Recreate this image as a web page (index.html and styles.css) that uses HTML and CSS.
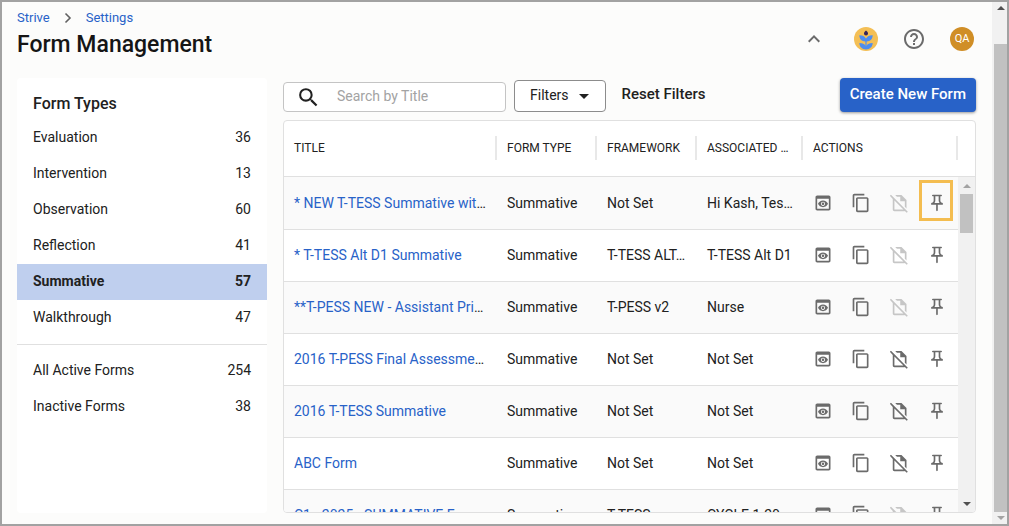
FILE: index.html
```html
<!DOCTYPE html>
<html lang="en">
<head>
    <meta charset="UTF-8">
    <meta name="viewport" content="width=device-width, initial-scale=1.0">
    <title>Form Management</title>
    <link rel="stylesheet" href="styles.css">
</head>
<body>
    <!-- shared icons -->
    <svg class="sprite" aria-hidden="true">
        <symbol id="i-preview" viewBox="0 0 24 24"><path d="M19 3H5c-1.11 0-2 .9-2 2v14c0 1.1.89 2 2 2h14c1.1 0 2-.9 2-2V5c0-1.1-.89-2-2-2zm0 16H5V7h14v12zm-5.5-6c0 .83-.67 1.5-1.5 1.5s-1.5-.67-1.5-1.5.67-1.5 1.5-1.5 1.5.67 1.5 1.5zM12 9c-2.73 0-5.06 1.66-6 4 .94 2.34 3.27 4 6 4s5.06-1.66 6-4c-.94-2.34-3.27-4-6-4zm0 6.5c-1.38 0-2.5-1.12-2.5-2.5s1.12-2.5 2.5-2.5 2.5 1.12 2.5 2.5-1.12 2.5-2.5 2.5z"/></symbol>
        <symbol id="i-copy" viewBox="0 0 24 24"><path d="M16 1H4c-1.1 0-2 .9-2 2v14h2V3h12V1zm3 4H8c-1.1 0-2 .9-2 2v14c0 1.1.9 2 2 2h11c1.1 0 2-.9 2-2V7c0-1.1-.9-2-2-2zm0 16H8V7h11v14z"/></symbol>
        <symbol id="i-fileoff" viewBox="0 0 24 24"><path d="M2.400 2 22.600 22.400 21.200 23.800 19 21.600c-.3.2-.6.3-1 .3H6.500c-1.100 0-2-.9-2-2V7.100L1 3.400zM6.500 9.100v10.800h10.800zM7.500 2.500H15l6 6v10l-2-2V10h-5.500V4.500H9.500z"/></symbol>
        <symbol id="i-pin" viewBox="0 0 24 24"><path d="M14 4v5c0 1.120.37 2.160 1 3H9c.65-.86 1-1.900 1-3V4h4m3-2H7c-.55 0-1 .45-1 1s.45 1 1 1h1v5c0 1.660-1.340 3-3 3v2h5.970v7l1 1 1-1v-7H19v-2c-1.660 0-3-1.340-3-3V4h1c.55 0 1-.45 1-1s-.45-1-1-1z"/></symbol>
    </svg>

    <div class="page">
        <div class="content">
            <header class="header">
                <div>
                    <nav class="crumbs" aria-label="Breadcrumb">
                        <a href="#">Strive</a>
                        <svg class="crumb-arrow" viewBox="0 0 8 12"><path d="M1.500 1.500 6 6l-4.500 4.500"/></svg>
                        <a href="#">Settings</a>
                    </nav>
                    <h1>Form Management</h1>
                </div>
                <div class="tools">
                    <button type="button" class="tool" aria-label="Collapse"><svg viewBox="0 0 24 24"><path d="m12 8-6 6 1.410 1.410L12 10.830l4.590 4.580L18 14z"/></svg></button>
                    <button type="button" class="tool logo" aria-label="Strive home">
                        <svg viewBox="0 0 24 24">
                            <circle cx="12" cy="12" r="12" fill="#f4bf55"/>
                            <path d="M12 3.500c1.300 1.200 2 1.900 2 2.900a2 2 0 0 1-4 0c0-1 .7-1.700 2-2.900z" fill="#35235d"/>
                            <path d="M12 14.500c-4.200.2-6.600-2.200-6.700-6.200 3.700-.1 6 1.300 6.700 3.900.7-2.600 3-4 6.700-3.900-.1 4-2.500 6.400-6.700 6.200z" fill="#4e8df0"/>
                            <path d="M12 22.500c-4.200-.3-6.500-2.600-6.700-6.500 3.700 0 6 1.300 6.700 3.700.7-2.400 3-3.700 6.700-3.700-.2 3.900-2.500 6.200-6.700 6.500z" fill="#4e8df0"/>
                            <path d="M11.400 11h1.200v11h-1.200z" fill="#4e8df0"/>
                        </svg>
                    </button>
                    <button type="button" class="tool" aria-label="Help"><svg viewBox="0 0 24 24"><path d="M11 18h2v-2h-2v2zm1-16C6.480 2 2 6.480 2 12s4.480 10 10 10 10-4.480 10-10S17.520 2 12 2zm0 18c-4.410 0-8-3.590-8-8s3.590-8 8-8 8 3.590 8 8-3.590 8-8 8zm0-14c-2.210 0-4 1.790-4 4h2c0-1.100.9-2 2-2s2 .9 2 2c0 2-3 1.750-3 5h2c0-2.250 3-2.500 3-5 0-2.210-1.790-4-4-4z"/></svg></button>
                    <button type="button" class="tool avatar">QA</button>
                </div>
            </header>

            <main class="main">
                <aside class="types">
                    <h2>Form Types</h2>
                    <ul>
                        <li><a href="#"><span>Evaluation</span><span>36</span></a></li>
                        <li><a href="#"><span>Intervention</span><span>13</span></a></li>
                        <li><a href="#"><span>Observation</span><span>60</span></a></li>
                        <li><a href="#"><span>Reflection</span><span>41</span></a></li>
                        <li><a href="#" class="active"><span>Summative</span><span>57</span></a></li>
                        <li><a href="#"><span>Walkthrough</span><span>47</span></a></li>
                    </ul>
                    <ul class="totals">
                        <li><a href="#"><span>All Active Forms</span><span>254</span></a></li>
                        <li><a href="#"><span>Inactive Forms</span><span>38</span></a></li>
                    </ul>
                </aside>

                <section class="forms">
                    <div class="toolbar">
                        <label class="search">
                            <svg viewBox="0 0 24 24"><path d="M15.500 14h-.79l-.28-.27A6.471 6.471 0 0 0 16 9.500 6.500 6.500 0 1 0 9.500 16c1.610 0 3.090-.59 4.230-1.570l.27.28v.79l5 4.990L20.490 19l-4.990-5zm-6 0C7.010 14 5 11.990 5 9.500S7.010 5 9.500 5 14 7.010 14 9.500 11.990 14 9.500 14z"/></svg>
                            <input type="text" placeholder="Search by Title" aria-label="Search by Title">
                        </label>
                        <button type="button" class="filters">Filters <span class="caret"></span></button>
                        <button type="button" class="reset">Reset Filters</button>
                        <button type="button" class="create">Create New Form</button>
                    </div>

                    <div class="panel">
                        <table>
                            <colgroup>
                                <col>
                                <col class="col-type">
                                <col class="col-framework">
                                <col class="col-assoc">
                                <col class="col-actions">
                            </colgroup>
                            <thead>
                                <tr>
                                    <th><span>TITLE</span></th>
                                    <th><span>FORM TYPE</span></th>
                                    <th><span>FRAMEWORK</span></th>
                                    <th><span>ASSOCIATED …</span></th>
                                    <th><span>ACTIONS</span></th>
                                </tr>
                            </thead>
                            <tbody>
                                <tr>
                                    <td><a href="#">* NEW T-TESS Summative wit</a>…</td>
                                    <td>Summative</td>
                                    <td>Not Set</td>
                                    <td>Hi Kash, Tes…</td>
                                    <td><div class="actions">
                                        <button type="button" aria-label="Preview"><svg><use href="#i-preview"/></svg></button>
                                        <button type="button" aria-label="Copy"><svg><use href="#i-copy"/></svg></button>
                                        <button type="button" aria-label="Deactivate" disabled><svg><use href="#i-fileoff"/></svg></button>
                                        <button type="button" aria-label="Pin" class="marked"><svg><use href="#i-pin"/></svg></button>
                                    </div></td>
                                </tr>
                                <tr>
                                    <td><a href="#">* T-TESS Alt D1 Summative</a></td>
                                    <td>Summative</td>
                                    <td>T-TESS ALT…</td>
                                    <td>T-TESS Alt D1</td>
                                    <td><div class="actions">
                                        <button type="button" aria-label="Preview"><svg><use href="#i-preview"/></svg></button>
                                        <button type="button" aria-label="Copy"><svg><use href="#i-copy"/></svg></button>
                                        <button type="button" aria-label="Deactivate" disabled><svg><use href="#i-fileoff"/></svg></button>
                                        <button type="button" aria-label="Pin"><svg><use href="#i-pin"/></svg></button>
                                    </div></td>
                                </tr>
                                <tr>
                                    <td><a href="#">**T-PESS NEW - Assistant Pri</a>…</td>
                                    <td>Summative</td>
                                    <td>T-PESS v2</td>
                                    <td>Nurse</td>
                                    <td><div class="actions">
                                        <button type="button" aria-label="Preview"><svg><use href="#i-preview"/></svg></button>
                                        <button type="button" aria-label="Copy"><svg><use href="#i-copy"/></svg></button>
                                        <button type="button" aria-label="Deactivate" disabled><svg><use href="#i-fileoff"/></svg></button>
                                        <button type="button" aria-label="Pin"><svg><use href="#i-pin"/></svg></button>
                                    </div></td>
                                </tr>
                                <tr>
                                    <td><a href="#">2016 T-PESS Final Assessme</a>…</td>
                                    <td>Summative</td>
                                    <td>Not Set</td>
                                    <td>Not Set</td>
                                    <td><div class="actions">
                                        <button type="button" aria-label="Preview"><svg><use href="#i-preview"/></svg></button>
                                        <button type="button" aria-label="Copy"><svg><use href="#i-copy"/></svg></button>
                                        <button type="button" aria-label="Deactivate"><svg><use href="#i-fileoff"/></svg></button>
                                        <button type="button" aria-label="Pin"><svg><use href="#i-pin"/></svg></button>
                                    </div></td>
                                </tr>
                                <tr>
                                    <td><a href="#">2016 T-TESS Summative</a></td>
                                    <td>Summative</td>
                                    <td>Not Set</td>
                                    <td>Not Set</td>
                                    <td><div class="actions">
                                        <button type="button" aria-label="Preview"><svg><use href="#i-preview"/></svg></button>
                                        <button type="button" aria-label="Copy"><svg><use href="#i-copy"/></svg></button>
                                        <button type="button" aria-label="Deactivate"><svg><use href="#i-fileoff"/></svg></button>
                                        <button type="button" aria-label="Pin"><svg><use href="#i-pin"/></svg></button>
                                    </div></td>
                                </tr>
                                <tr>
                                    <td><a href="#">ABC Form</a></td>
                                    <td>Summative</td>
                                    <td>Not Set</td>
                                    <td>Not Set</td>
                                    <td><div class="actions">
                                        <button type="button" aria-label="Preview"><svg><use href="#i-preview"/></svg></button>
                                        <button type="button" aria-label="Copy"><svg><use href="#i-copy"/></svg></button>
                                        <button type="button" aria-label="Deactivate"><svg><use href="#i-fileoff"/></svg></button>
                                        <button type="button" aria-label="Pin"><svg><use href="#i-pin"/></svg></button>
                                    </div></td>
                                </tr>
                                <tr>
                                    <td><a href="#">C1 - 2025 - SUMMATIVE E</a></td>
                                    <td>Summative</td>
                                    <td>T-TESS</td>
                                    <td>CYCLE 1-20</td>
                                    <td><div class="actions">
                                        <button type="button" aria-label="Preview"><svg><use href="#i-preview"/></svg></button>
                                        <button type="button" aria-label="Copy"><svg><use href="#i-copy"/></svg></button>
                                        <button type="button" aria-label="Deactivate" disabled><svg><use href="#i-fileoff"/></svg></button>
                                        <button type="button" aria-label="Pin"><svg><use href="#i-pin"/></svg></button>
                                    </div></td>
                                </tr>
                            </tbody>
                        </table>
                        <div class="panel-side" aria-hidden="true">
                            <div class="scrollbar">
                                <span class="arrow up off"></span>
                                <span class="thumb thumb-short"></span>
                                <span class="arrow down"></span>
                            </div>
                        </div>
                    </div>
                </section>
            </main>
        </div>

        <div class="scrollbar page-scroll" aria-hidden="true">
            <span class="arrow up"></span>
            <span class="thumb"></span>
            <span class="arrow down off"></span>
        </div>
    </div>
</body>
</html>
```

FILE: styles.css
```css
* {
    box-sizing: border-box;
}
body {
    margin: 0;
    font-family: Roboto, 'Liberation Sans', sans-serif;
    font-size: 14px;
    line-height: 20px;
    color: #212121;
}
a {
    color: #2862c8;
    text-decoration: none;
}
button {
    font: inherit;
    color: inherit;
    padding: 0;
    border: none;
    background: none;
    cursor: pointer;
}
svg {
    display: block;
    fill: currentColor;
}
.sprite {
    position: absolute;
    width: 0;
    height: 0;
}
.page {
    display: flex;
    height: 100vh;
    border: 2px solid #a2a2a2;
    background-color: #fcfcfb;
}
.content {
    flex: 1;
    min-width: 0;
    display: flex;
    flex-direction: column;
    padding: 5px 16px 11px 15px;
}

/* header */
.header {
    display: flex;
    justify-content: space-between;
    min-height: 64px;
    margin-bottom: 7px;
}
.crumbs {
    display: flex;
    align-items: center;
    font-size: 13px;
    line-height: 22px;
}
.crumb-arrow {
    width: 8px;
    height: 12px;
    margin: 0 14px;
    fill: none;
    stroke: #616161;
    stroke-width: 1.6;
}
h1 {
    margin: 0;
    font-size: 23px;
    font-weight: 500;
    line-height: 32px;
    color: #151515;
}
.tools {
    display: flex;
    align-items: center;
    gap: 24px;
    padding-right: 2px;
    color: #6b6b6b;
}
.tool {
    width: 24px;
    height: 24px;
}
.logo {
    margin-left: 4px;
}
.avatar {
    border-radius: 50%;
    background-color: #d08e26;
    color: #fff;
    font-size: 11px;
}

/* form types list */
.main {
    flex: 1;
    min-height: 0;
    display: flex;
    gap: 16px;
}
.types {
    width: 250px;
    background-color: #fff;
    border-radius: 4px;
}
.types h2 {
    margin: 0;
    padding: 16px 16px 6px;
    font-size: 16px;
    font-weight: 500;
}
.types ul {
    list-style: none;
    margin: 0;
    padding: 0;
}
.types a {
    display: flex;
    justify-content: space-between;
    padding: 7px 16px 9px;
    color: inherit;
}
.types .active {
    background-color: #bfcfee;
    font-weight: 700;
}
.types .totals {
    margin-top: 8px;
    padding-top: 8px;
    border-top: 1px solid #e0e0e0;
}

/* toolbar */
.forms {
    flex: 1;
    min-width: 0;
    display: flex;
    flex-direction: column;
    gap: 8px;
}
.toolbar {
    display: flex;
    align-items: flex-end;
    gap: 8px;
}
.search {
    display: flex;
    align-items: center;
    width: 223px;
    height: 30px;
    padding-left: 12px;
    border: 1px solid #c4c4c4;
    border-radius: 4px;
    background-color: #fff;
}
.search svg {
    width: 25px;
    height: 25px;
    flex: none;
}
.search input {
    flex: 1;
    min-width: 0;
    padding: 0 0 2px 16px;
    border: none;
    outline: none;
    background: none;
    font: inherit;
}
.search input::placeholder {
    color: #a3a3a3;
}
.filters {
    display: flex;
    align-items: center;
    gap: 10px;
    height: 32px;
    padding: 0 16px 2px 15px;
    border: 1px solid #8c8c8c;
    border-radius: 4px;
    background-color: #fff;
}
.caret {
    margin-top: 2px;
    border: 5px solid transparent;
    border-top-color: currentColor;
    border-bottom: none;
}
.reset {
    align-self: center;
    padding: 0 8px 2px;
    font-size: 15px;
    font-weight: 500;
}
.create {
    height: 34px;
    margin-left: auto;
    padding: 0 10px 2px;
    border-radius: 4px;
    background-color: #2862c8;
    color: #fff;
    font-size: 15px;
    font-weight: 500;
    box-shadow: 0 1px 3px rgba(0, 0, 0, 0.4);
}

/* forms table */
.panel {
    flex: 1;
    min-height: 0;
    display: flex;
    overflow: hidden;
    border: 1px solid #e0e0e0;
    border-radius: 4px;
    background-color: #fff;
}
table {
    flex: 1;
    min-width: 0;
    align-self: flex-start;
    table-layout: fixed;
    border-collapse: separate;
    border-spacing: 0;
}
.col-type,
.col-framework {
    width: 100px;
}
.col-assoc {
    width: 106px;
}
.col-actions {
    width: 155px;
}
th,
td {
    padding: 0 10px 2px;
    text-align: left;
    white-space: nowrap;
    overflow: hidden;
    text-overflow: ellipsis;
}
th {
    height: 56px;
    padding-right: 0;
    border-bottom: 1px solid #e0e0e0;
    font-size: 12px;
    font-weight: 400;
}
th span {
    display: block;
    line-height: 24px;
    border-right: 2px solid #e8e8e8;
}
td {
    height: 52px;
    border-top: 1px solid #e0e0e0;
}
tbody tr:first-child td {
    border-top-color: #fafafa;
}
tbody tr:nth-child(odd) {
    background-color: #fafafa;
}
td:last-child {
    overflow: visible;
}
.actions {
    display: flex;
    gap: 18px;
    color: #6b6b6b;
}
.actions button {
    position: relative;
    width: 20px;
    height: 20px;
}
.actions svg {
    width: 20px;
    height: 20px;
}
.actions button:disabled {
    color: #c6c6c6;
}
/* highlight ring around the pin action */
.marked::after {
    content: '';
    position: absolute;
    inset: -13px -6px -8px -8px;
    border: 3px solid #f4bd50;
}

/* scrollbars */
.panel-side {
    display: flex;
    width: 17px;
    padding-top: 55px;
}
.panel-side .scrollbar {
    border-top: 1px solid #e0e0e0;
}
.scrollbar {
    flex: 1;
    display: flex;
    flex-direction: column;
    background-color: #f1f1f1;
}
.page-scroll {
    flex: none;
    width: 15px;
}
.arrow {
    display: flex;
    align-items: center;
    justify-content: center;
    height: 17px;
    flex: none;
    color: #505050;
}
.arrow::before {
    content: '';
    border: 4px solid transparent;
}
.arrow.up::before {
    border-top: none;
    border-bottom-color: currentColor;
}
.arrow.down::before {
    border-bottom: none;
    border-top-color: currentColor;
}
.arrow.off {
    color: #a3a3a3;
}
.thumb {
    flex: 1;
    margin: 0 2px;
    background-color: #c1c1c1;
}
.thumb-short {
    flex: none;
    height: 39px;
    margin-bottom: auto;
}
.page-scroll .arrow {
    height: 12px;
    padding-left: 2px;
}
.page-scroll .thumb {
    margin: 30px 0 0 2px;
}
```
